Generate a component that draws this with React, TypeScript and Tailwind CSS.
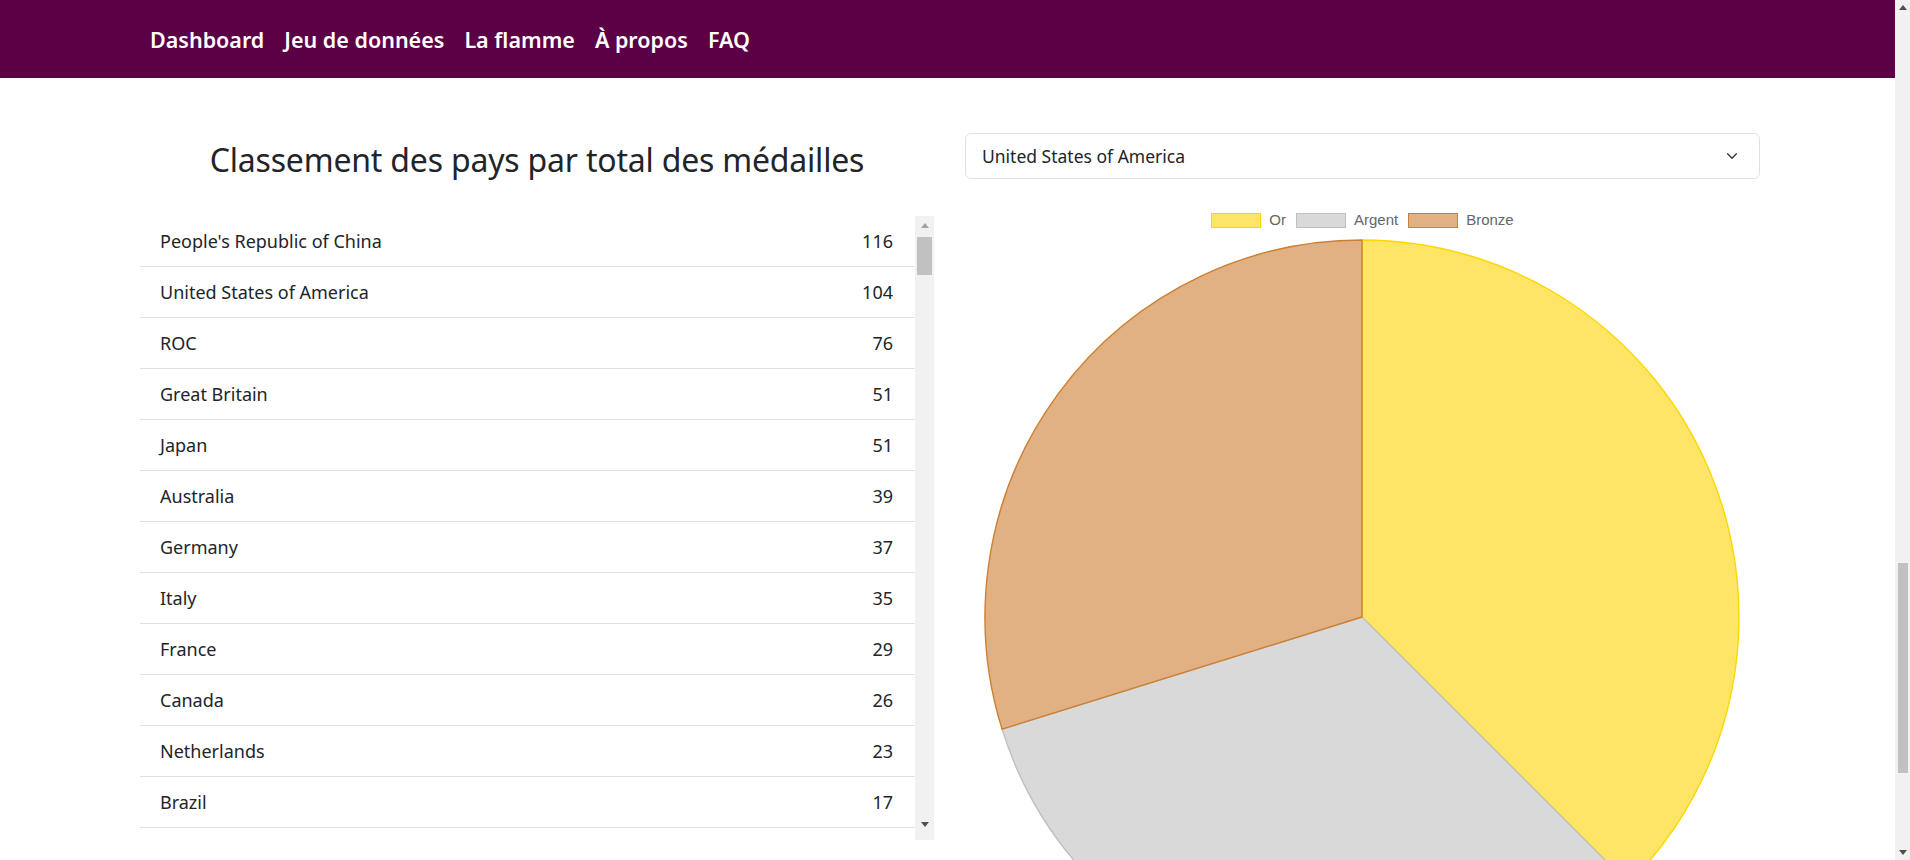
import React from "react";

const rows: [string, number][] = [
  ["People's Republic of China", 116],
  ["United States of America", 104],
  ["ROC", 76],
  ["Great Britain", 51],
  ["Japan", 51],
  ["Australia", 39],
  ["Germany", 37],
  ["Italy", 35],
  ["France", 29],
  ["Canada", 26],
  ["Netherlands", 23],
  ["Brazil", 17],
];

const slices = [
  { label: "Or", value: 39, fill: "#fee566", stroke: "#ffd700" },
  { label: "Argent", value: 34, fill: "#d9d9d9", stroke: "#c0c0c0" },
  { label: "Bronze", value: 31, fill: "#e1b184", stroke: "#cd7f32" },
];

function Pie() {
  const cx = 397;
  const cy = 379;
  const r = 377;
  const total = slices.reduce((a, s) => a + s.value, 0);
  let start = 0;
  const pt = (deg: number) => {
    const a = (deg * Math.PI) / 180;
    return [cx + r * Math.sin(a), cy - r * Math.cos(a)];
  };
  return (
    <svg width="795" height="760" viewBox="0 0 795 760" className="block">
      {slices.map((s) => {
        const sweep = (s.value / total) * 360;
        const [x1, y1] = pt(start);
        const [x2, y2] = pt(start + sweep);
        const large = sweep > 180 ? 1 : 0;
        const d = `M${cx} ${cy} L${x1} ${y1} A${r} ${r} 0 ${large} 1 ${x2} ${y2} Z`;
        start += sweep;
        return <path key={s.label} d={d} fill={s.fill} stroke={s.stroke} strokeWidth="1.4" strokeLinejoin="round" />;
      })}
    </svg>
  );
}

export default function App() {
  return (
    <div className="flex h-[860px] w-full overflow-hidden bg-white" style={{ fontFamily: "'Noto Sans', Lato, sans-serif" }}>
      <div className="flex-1 min-w-0 overflow-hidden">
        <header className="h-[78px] bg-[#5b0045] flex items-center pl-[150px] gap-[20px] text-white text-[21.5px] font-semibold pt-[2px]">
          <span>Dashboard</span>
          <span>Jeu de données</span>
          <span>La flamme</span>
          <span>À propos</span>
          <span>FAQ</span>
        </header>
        <div className="flex pl-[140px] gap-[31px]">
          <div className="w-[794px] shrink-0">
            <div className="pt-[62px] h-[138px]">
              <h1 className="text-center text-[32px] leading-[40px] text-[#212529] font-normal tracking-[-0.2px]">
                Classement des pays par total des médailles
              </h1>
            </div>
            <div className="flex h-[624px]">
              <div className="w-[775px] overflow-hidden">
                {rows.map(([name, n]) => (
                  <div key={name} className="h-[51px] border-b border-[#dee2e6] flex items-center justify-between pl-[20px] pr-[22px] text-[18px] text-[#212529]">
                    <span>{name}</span>
                    <span>{n}</span>
                  </div>
                ))}
              </div>
              <div className="w-[19px] bg-[#f1f1f1] flex flex-col items-center">
                <div className="h-[18px] flex items-center justify-center">
                  <div className="w-0 h-0 border-l-[4px] border-r-[4px] border-b-[5px] border-l-transparent border-r-transparent border-b-[#a3a3a3]" />
                </div>
                <div className="mt-[3px] h-[38px] w-[15px] bg-[#c1c1c1]" />
                <div className="flex-1" />
                <div className="h-[24px] flex items-start pt-[6px] justify-center">
                  <div className="w-0 h-0 border-l-[4px] border-r-[4px] border-t-[5px] border-l-transparent border-r-transparent border-t-[#505050]" />
                </div>
              </div>
            </div>
          </div>
          <div className="w-[795px] shrink-0 pt-[55px]">
            <div className="h-[46px] border border-[#dee2e6] rounded-[6px] flex items-center justify-between pl-[16px] pr-[20px] text-[17.5px] text-[#212529]">
              <span>United States of America</span>
              <svg width="14" height="14" viewBox="0 0 16 16" fill="none" stroke="#343a40" strokeWidth="1.6" strokeLinecap="round" strokeLinejoin="round">
                <path d="M3 5.5l5 5 5-5" />
              </svg>
            </div>
            <div className="mt-[33px] h-[16px] flex justify-center items-center text-[15px] text-[#666666]" style={{ fontFamily: "'Liberation Sans', Arial, sans-serif" }}>
              {slices.map((s) => (
                <div key={s.label} className="flex items-center mx-[5px]">
                  <div className="w-[50px] h-[15px] border-[1.5px]" style={{ background: s.fill, borderColor: s.stroke }} />
                  <span className="ml-[8px] leading-[16px]">{s.label}</span>
                </div>
              ))}
            </div>
            <div className="mt-[10px]">
              <Pie />
            </div>
          </div>
        </div>
      </div>
      <div className="w-[15px] h-[860px] bg-[#f1f1f1] flex flex-col items-center shrink-0">
        <div className="h-[15px] flex items-center justify-center">
          <div className="w-0 h-0 border-l-[4px] border-r-[4px] border-b-[5px] border-l-transparent border-r-transparent border-b-[#505050]" />
        </div>
        <div className="mt-[548px] h-[210px] w-[10px] bg-[#c1c1c1]" />
        <div className="flex-1" />
        <div className="h-[15px] flex items-center justify-center">
          <div className="w-0 h-0 border-l-[4px] border-r-[4px] border-t-[5px] border-l-transparent border-r-transparent border-t-[#505050]" />
        </div>
      </div>
    </div>
  );
}
